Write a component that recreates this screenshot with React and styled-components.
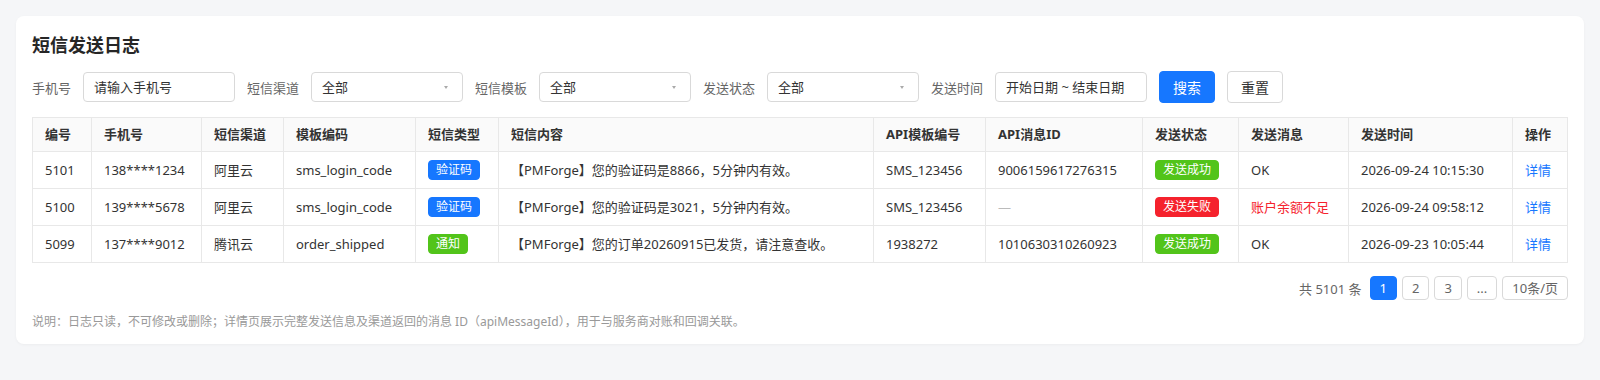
import React from "react";
import styled, { createGlobalStyle } from "styled-components";

const GlobalStyle = createGlobalStyle`
  * { box-sizing: border-box; }
  body {
    margin: 0;
    background: #f5f6f8;
    font-family: "Noto Sans", "Noto Sans CJK SC", sans-serif;
    color: #333;
  }
`;

const Page = styled.div`
  padding: 16px;
`;

const Card = styled.section`
  background: #fff;
  border-radius: 8px;
  padding: 16px 16px 13px;
  box-shadow: 0 1px 3px rgba(0, 0, 0, 0.04);
`;

const Title = styled.h2`
  margin: 0 0 13px;
  font-size: 18px;
  line-height: 26px;
  font-weight: 700;
  color: #262626;
`;

const FilterBar = styled.div`
  display: flex;
  align-items: center;
  gap: 12px;
  height: 32px;
`;

const FilterItem = styled.div`
  display: flex;
  align-items: center;
`;

const Label = styled.span`
  font-size: 13px;
  color: #666;
  margin-right: 12px;
  white-space: nowrap;
`;

const TextInput = styled.input`
  width: 152px;
  height: 30px;
  border: 1px solid #d9d9d9;
  border-radius: 4px;
  padding: 0 10px;
  font: inherit;
  font-size: 13px;
  color: #333;
  outline: none;
  &::placeholder { color: #333; }
`;

const SelectBox = styled.div`
  position: relative;
  width: 152px;
  height: 30px;
  border: 1px solid #d9d9d9;
  border-radius: 4px;
  padding: 0 10px;
  font-size: 13px;
  line-height: 28px;
  color: #333;
  white-space: nowrap;
`;

const Caret = styled.span`
  position: absolute;
  right: 14px;
  top: 13px;
  width: 0;
  height: 0;
  border-left: 2.5px solid transparent;
  border-right: 2.5px solid transparent;
  border-top: 3px solid #aaa;
`;

const Button = styled.button`
  height: 32px;
  padding: 0 13px;
  border-radius: 4px;
  font: inherit;
  font-size: 14px;
  cursor: pointer;
  border: 1px solid ${(p) => (p.$primary ? "#1677ff" : "#d9d9d9")};
  background: ${(p) => (p.$primary ? "#1677ff" : "#fff")};
  color: ${(p) => (p.$primary ? "#fff" : "#333")};
`;

const Table = styled.table`
  margin-top: 14px;
  width: 100%;
  border-collapse: collapse;
  table-layout: fixed;
  font-size: 13px;
`;

const Col = styled.col`
  width: ${(p) => p.$w}px;
`;

const Th = styled.th`
  background: #fafafa;
  border: 1px solid #e8e8e8;
  padding: 8px 12px;
  line-height: 17px;
  text-align: left;
  font-weight: 700;
  color: #333;
  white-space: nowrap;
`;

const Td = styled.td`
  border: 1px solid #e8e8e8;
  padding: 8px 12px;
  line-height: 20px;
  vertical-align: middle;
  color: ${(p) => p.$color || "#333"};
  white-space: nowrap;
`;

const Tag = styled.span`
  display: inline-block;
  vertical-align: top;
  font-size: 12px;
  line-height: 18px;
  padding: 0 7px;
  border-radius: 4px;
  color: #fff;
  background: ${(p) => p.$bg};
  border: 1px solid ${(p) => p.$bg};
`;

const Link = styled.a`
  color: #1677ff;
  text-decoration: none;
  cursor: pointer;
`;

const Dash = styled.span`
  color: #bbb;
`;

const Pagination = styled.div`
  display: flex;
  justify-content: flex-end;
  align-items: center;
  gap: 5px;
  margin-top: 13px;
`;

const Total = styled.span`
  font-size: 13px;
  color: #666;
  margin-right: 3px;
`;

const PageBtn = styled.button`
  min-width: 27px;
  height: 24px;
  padding: 0 9px;
  border-radius: 4px;
  font: inherit;
  font-size: 13px;
  line-height: 22px;
  cursor: pointer;
  border: 1px solid ${(p) => (p.$active ? "#1677ff" : "#d9d9d9")};
  background: ${(p) => (p.$active ? "#1677ff" : "#fff")};
  color: ${(p) => (p.$active ? "#fff" : "#666")};
`;

const Note = styled.p`
  margin: 13px 0 0;
  font-size: 12px;
  line-height: 18px;
  color: #999;
`;

const COLORS = {
  blue: "#1677ff",
  green: "#52c41a",
  red: "#f5222d",
};

const columns = [
  ["编号", 59],
  ["手机号", 110],
  ["短信渠道", 82],
  ["模板编码", 132],
  ["短信类型", 83],
  ["短信内容", 375],
  ["API模板编号", 112],
  ["API消息ID", 157],
  ["发送状态", 96],
  ["发送消息", 110],
  ["发送时间", 164],
  ["操作", 55],
];

const rows = [
  {
    id: "5101",
    phone: "138****1234",
    channel: "阿里云",
    code: "sms_login_code",
    type: ["验证码", "blue"],
    content: "【PMForge】您的验证码是8866，5分钟内有效。",
    apiTpl: "SMS_123456",
    apiId: "9006159617276315",
    status: ["发送成功", "green"],
    msg: "OK",
    time: "2026-09-24 10:15:30",
  },
  {
    id: "5100",
    phone: "139****5678",
    channel: "阿里云",
    code: "sms_login_code",
    type: ["验证码", "blue"],
    content: "【PMForge】您的验证码是3021，5分钟内有效。",
    apiTpl: "SMS_123456",
    apiId: null,
    status: ["发送失败", "red"],
    msg: "账户余额不足",
    msgError: true,
    time: "2026-09-24 09:58:12",
  },
  {
    id: "5099",
    phone: "137****9012",
    channel: "腾讯云",
    code: "order_shipped",
    type: ["通知", "green"],
    content: "【PMForge】您的订单20260915已发货，请注意查收。",
    apiTpl: "1938272",
    apiId: "1010630310260923",
    status: ["发送成功", "green"],
    msg: "OK",
    time: "2026-09-23 10:05:44",
  },
];

export default function App() {
  return (
    <>
      <GlobalStyle />
      <Page>
        <Card>
          <Title>短信发送日志</Title>
          <FilterBar>
            <FilterItem>
              <Label>手机号</Label>
              <TextInput placeholder="请输入手机号" />
            </FilterItem>
            <FilterItem>
              <Label>短信渠道</Label>
              <SelectBox>
                全部
                <Caret />
              </SelectBox>
            </FilterItem>
            <FilterItem>
              <Label>短信模板</Label>
              <SelectBox>
                全部
                <Caret />
              </SelectBox>
            </FilterItem>
            <FilterItem>
              <Label>发送状态</Label>
              <SelectBox>
                全部
                <Caret />
              </SelectBox>
            </FilterItem>
            <FilterItem>
              <Label>发送时间</Label>
              <SelectBox>开始日期 ~ 结束日期</SelectBox>
            </FilterItem>
            <Button $primary>搜索</Button>
            <Button>重置</Button>
          </FilterBar>

          <Table>
            <colgroup>
              {columns.map(([name, w]) => (
                <Col key={name} $w={w} />
              ))}
            </colgroup>
            <thead>
              <tr>
                {columns.map(([name]) => (
                  <Th key={name}>{name}</Th>
                ))}
              </tr>
            </thead>
            <tbody>
              {rows.map((r) => (
                <tr key={r.id}>
                  <Td>{r.id}</Td>
                  <Td>{r.phone}</Td>
                  <Td>{r.channel}</Td>
                  <Td>{r.code}</Td>
                  <Td>
                    <Tag $bg={COLORS[r.type[1]]}>{r.type[0]}</Tag>
                  </Td>
                  <Td>{r.content}</Td>
                  <Td>{r.apiTpl}</Td>
                  <Td>{r.apiId ? r.apiId : <Dash>—</Dash>}</Td>
                  <Td>
                    <Tag $bg={COLORS[r.status[1]]}>{r.status[0]}</Tag>
                  </Td>
                  <Td $color={r.msgError ? COLORS.red : undefined}>{r.msg}</Td>
                  <Td>{r.time}</Td>
                  <Td>
                    <Link>详情</Link>
                  </Td>
                </tr>
              ))}
            </tbody>
          </Table>

          <Pagination>
            <Total>共 5101 条</Total>
            <PageBtn $active>1</PageBtn>
            <PageBtn>2</PageBtn>
            <PageBtn>3</PageBtn>
            <PageBtn>...</PageBtn>
            <PageBtn>10条/页</PageBtn>
          </Pagination>

          <Note>
            说明：日志只读，不可修改或删除；详情页展示完整发送信息及渠道返回的消息 ID（apiMessageId），用于与服务商对账和回调关联。
          </Note>
        </Card>
      </Page>
    </>
  );
}
